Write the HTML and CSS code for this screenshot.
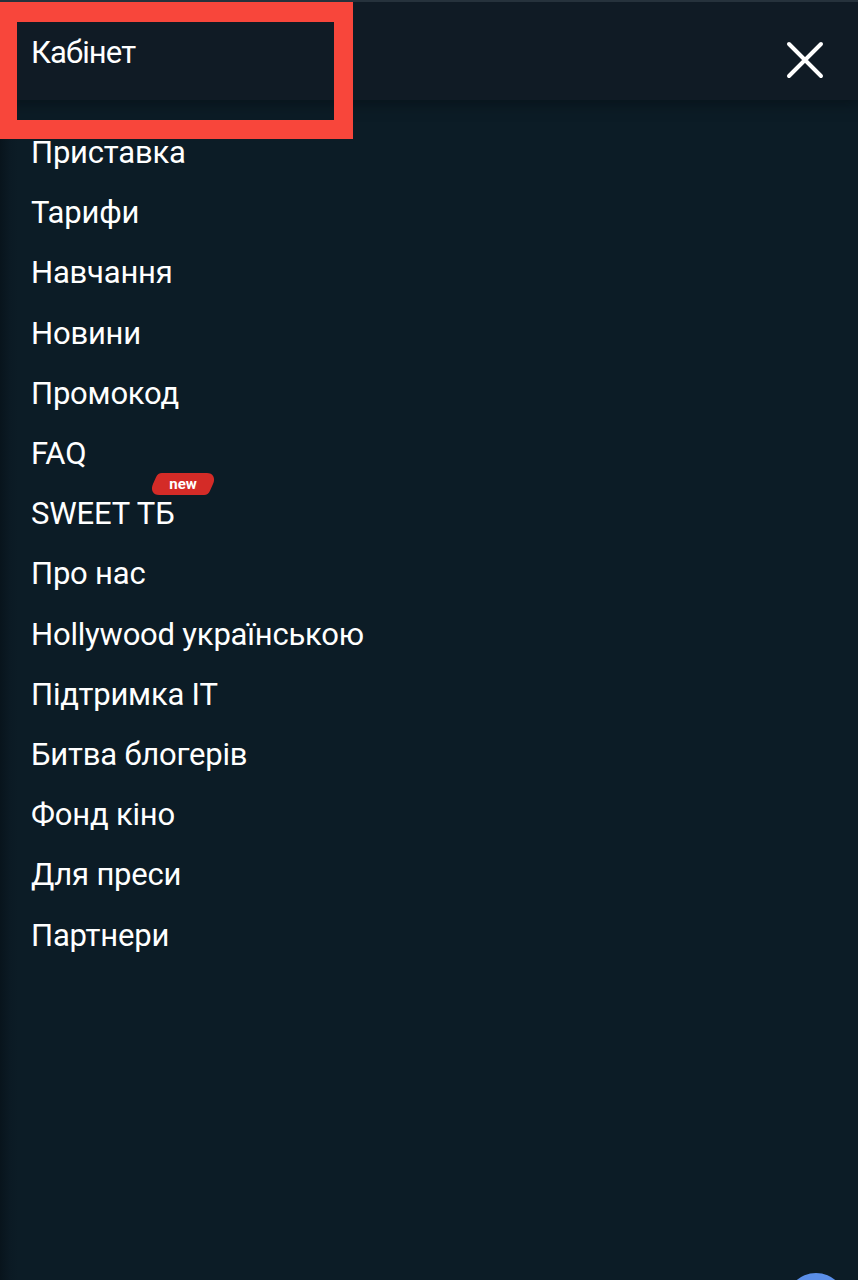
FILE: index.html
```html
<!DOCTYPE html>
<html lang="uk">
<head>
  <meta charset="UTF-8">
  <meta name="viewport" content="width=device-width, initial-scale=1.0">
  <title>Меню</title>
  <link rel="stylesheet" href="styles.css">
</head>
<body>
  <div class="menu">
    <header class="menu-header">
      <a class="cabinet" href="#">Кабінет</a>
      <button class="close-btn" aria-label="Закрити">
        <svg width="38" height="38" viewBox="0 0 38 38">
          <path d="M3 3 L35 35 M35 3 L3 35" stroke="#ffffff" stroke-width="4" stroke-linecap="round" fill="none"/>
        </svg>
      </button>
      <div class="highlight"></div>
    </header>

    <nav class="menu-list">
      <a href="#">Приставка</a>
      <a href="#">Тарифи</a>
      <a href="#">Навчання</a>
      <a href="#">Новини</a>
      <a href="#">Промокод</a>
      <a href="#">FAQ</a>
      <a href="#">SWEET ТБ<span class="badge"><span>new</span></span></a>
      <a href="#">Про нас</a>
      <a href="#">Hollywood українською</a>
      <a href="#">Підтримка IT</a>
      <a href="#">Битва блогерів</a>
      <a href="#">Фонд кіно</a>
      <a href="#">Для преси</a>
      <a href="#">Партнери</a>
    </nav>

    <div class="chat-bubble"></div>
  </div>
</body>
</html>
```

FILE: styles.css
```css
html, body {
    height: 100%;
}

body {
    margin: 0;
    font-family: Roboto, "Noto Sans", sans-serif;
    background-color: #0c1c26;
    color: #ffffff;
    overflow: hidden;
}

.menu {
    position: relative;
    height: 100%;
    background: linear-gradient(90deg, #08141c 0, #0b1a24 10px, #0c1c26 18px);
}

.menu-header {
    position: relative;
    display: flex;
    justify-content: space-between;
    align-items: flex-start;
    height: 100px;
    box-sizing: border-box;
    padding: 0 34px 0 31px;
    background-color: #101b25;
    border-top: 2px solid #26323c;
    box-shadow: 0 4px 12px rgba(4, 12, 18, 0.55);
    z-index: 2;
}

.cabinet {
    display: block;
    margin-top: 31px;
    color: #ffffff;
    text-decoration: none;
    font-size: 31px;
    line-height: 40px;
    letter-spacing: -0.9px;
}

.close-btn {
    margin-top: 39px;
    padding: 0;
    width: 38px;
    height: 38px;
    border: none;
    background: none;
    cursor: pointer;
}

.close-btn svg {
    display: block;
}

/* red annotation frame */
.highlight {
    position: absolute;
    left: 0;
    top: 0;
    width: 353px;
    height: 137px;
    box-sizing: border-box;
    border: 19px solid #f8463b;
    border-left-width: 17px;
    border-top-width: 20px;
    pointer-events: none;
}

.menu-list {
    display: flex;
    flex-direction: column;
    padding: 23px 0 0 31px;
}

.menu-list a {
    position: relative;
    align-self: flex-start;
    color: #ffffff;
    text-decoration: none;
    font-size: 31px;
    line-height: 60.2px;
    letter-spacing: -0.2px;
}

.badge {
    position: absolute;
    left: 122px;
    top: -11px;
    width: 60px;
    height: 22px;
    border-radius: 4px 11px 4px 11px;
    background-color: #d42b27;
    transform: skewX(-24deg);
}

.badge span {
    display: block;
    transform: skewX(24deg);
    font-size: 15px;
    font-weight: 700;
    line-height: 22px;
    text-align: center;
    letter-spacing: 0;
}

.chat-bubble {
    position: absolute;
    left: 786px;
    top: 1273px;
    width: 60px;
    height: 60px;
    border-radius: 50%;
    background-color: #5b8fe9;
}
```
